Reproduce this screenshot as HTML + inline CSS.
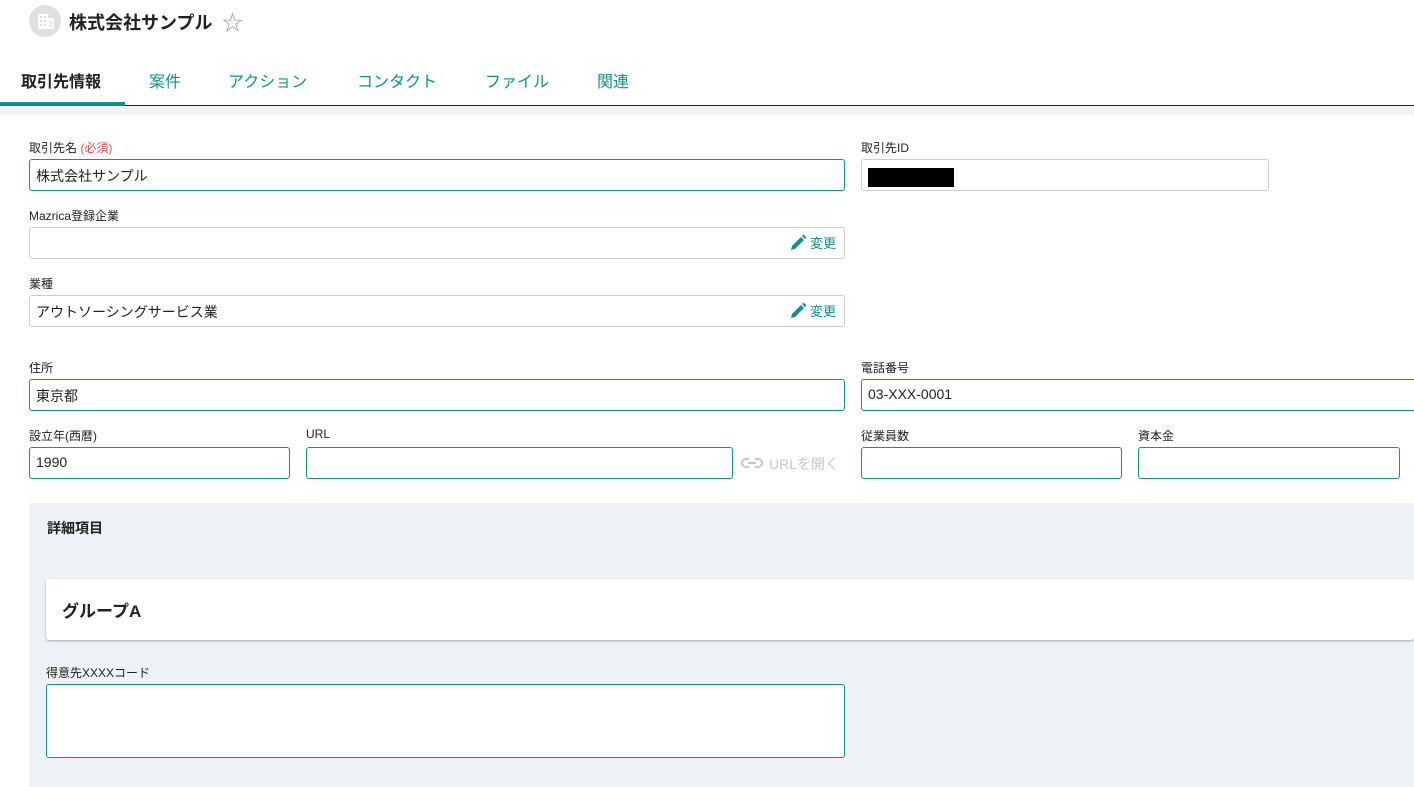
<!DOCTYPE html>
<html><head><meta charset="utf-8"><style>
*{box-sizing:border-box;margin:0;padding:0}
body{width:1414px;height:787px;overflow:hidden;background:#fff;font-family:"Liberation Sans","Noto Sans CJK JP",sans-serif;color:#222;position:relative}
.a{position:absolute}
.lbl{position:absolute;font-size:12px;color:#222;margin-top:-1px}
.in{position:absolute;border:1px solid #1a8f88;border-radius:3px;height:32px;font-size:14px;padding:6px 6px;background:#fff}
.gr{border-color:#ccc}
.chg{position:absolute;right:8px;top:5px;color:#12918a;font-size:13px;display:flex;align-items:center;gap:3px}
.tab{position:absolute;top:68px;font-size:16px;color:#12918a}
</style></head><body>
<div class="a" style="left:29px;top:5px;width:32px;height:32px;border-radius:50%;background:#e0e0e0"></div>
<svg class="a" style="left:36px;top:12px" width="20" height="19" viewBox="0 0 20 19"><rect x="2" y="2" width="10" height="15" fill="#fff"/><rect x="12" y="6" width="6" height="11" fill="#fff"/><g fill="#e0e0e0"><rect x="4" y="4" width="2" height="2"/><rect x="8" y="4" width="2" height="2"/><rect x="4" y="8" width="2" height="2"/><rect x="8" y="8" width="2" height="2"/><rect x="4" y="12" width="2" height="2"/><rect x="8" y="12" width="2" height="2"/><rect x="14" y="9" width="2" height="2"/><rect x="14" y="13" width="2" height="2"/></g></svg>
<div class="a" style="left:69px;top:9px;font-size:18px;font-weight:bold">株式会社サンプル</div>
<div class="a" style="left:222px;top:7px;font-size:21px;color:#999">☆</div>
<div class="tab" style="left:21px;color:#222;font-weight:bold">取引先情報</div>
<div class="tab" style="left:149px">案件</div>
<div class="tab" style="left:228px">アクション</div>
<div class="tab" style="left:357px">コンタクト</div>
<div class="tab" style="left:485px">ファイル</div>
<div class="tab" style="left:597px">関連</div>
<div class="a" style="left:0;top:105px;width:1414px;height:1px;background:#222"></div>
<div class="a" style="left:0;top:102px;width:125px;height:4px;background:#12918a"></div>
<div class="a" style="left:0;top:106px;width:1414px;height:9px;background:#f4f4f4"></div>

<div class="lbl" style="left:29px;top:140px">取引先名 <span style="color:#e0524c">(必須)</span></div>
<div class="in" style="left:29px;top:159px;width:816px">株式会社サンプル</div>
<div class="lbl" style="left:861px;top:140px">取引先ID</div>
<div class="in gr" style="left:861px;top:159px;width:408px"><div style="width:86px;height:19px;background:#000;margin-top:2px"></div></div>

<div class="lbl" style="left:29px;top:208px">Mazrica登録企業</div>
<div class="in gr" style="left:29px;top:227px;width:816px"><div class="chg"><svg width="18" height="18" viewBox="0 0 18 18"><path d="M2 16l1-4 9-9 3 3-9 9z M13 2l1.5-1.5 3 3L16 5z" fill="#12918a"/></svg>変更</div></div>
<div class="lbl" style="left:29px;top:276px">業種</div>
<div class="in gr" style="left:29px;top:295px;width:816px">アウトソーシングサービス業<div class="chg"><svg width="18" height="18" viewBox="0 0 18 18"><path d="M2 16l1-4 9-9 3 3-9 9z M13 2l1.5-1.5 3 3L16 5z" fill="#12918a"/></svg>変更</div></div>

<div class="lbl" style="left:29px;top:360px">住所</div>
<div class="in" style="left:29px;top:379px;width:816px">東京都</div>
<div class="lbl" style="left:861px;top:360px">電話番号</div>
<div class="in" style="left:861px;top:379px;width:560px">03-XXX-0001</div>

<div class="lbl" style="left:29px;top:428px">設立年(西暦)</div>
<div class="in" style="left:29px;top:447px;width:261px">1990</div>
<div class="lbl" style="left:306px;top:428px">URL</div>
<div class="in" style="left:306px;top:447px;width:427px"></div>
<svg class="a" style="left:741px;top:456px" width="22" height="14" viewBox="0 0 22 14"><path d="M8 3H5a4 4 0 000 8h3M14 3h3a4 4 0 010 8h-3M7 7h8" stroke="#c8c8c8" stroke-width="2" fill="none"/></svg>
<div class="a" style="left:769px;top:454px;font-size:14px;color:#c8c8c8">URLを開く</div>
<div class="lbl" style="left:861px;top:428px">従業員数</div>
<div class="in" style="left:861px;top:447px;width:261px"></div>
<div class="lbl" style="left:1138px;top:428px">資本金</div>
<div class="in" style="left:1138px;top:447px;width:262px"></div>

<div class="a" style="left:29px;top:503px;width:1385px;height:284px;background:#eef1f5"></div>
<div class="a" style="left:47px;top:518px;font-size:14px;font-weight:bold">詳細項目</div>
<div class="a" style="left:46px;top:579px;width:1368px;height:61px;background:#fff;border-radius:3px;box-shadow:0 1px 2px rgba(0,0,0,.3)"></div>
<div class="a" style="left:62px;top:597px;font-size:17px;font-weight:bold">グループA</div>
<div class="lbl" style="left:46px;top:665px">得意先XXXXコード</div>
<div class="in" style="left:46px;top:684px;width:799px;height:74px"></div>
</body></html>
